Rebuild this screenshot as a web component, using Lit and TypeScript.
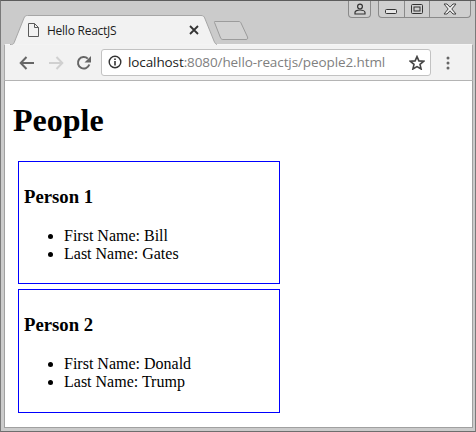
import { LitElement, html, css, svg } from "lit";
import { customElement } from "lit/decorators.js";

const people = [
  { name: "Person 1", first: "Bill", last: "Gates" },
  { name: "Person 2", first: "Donald", last: "Trump" },
];

@customElement("app-root")
export class AppRoot extends LitElement {
  static styles = css`
    :host { display: block; width: 476px; height: 432px; overflow: hidden; }
    .window {
      box-sizing: border-box; width: 476px; height: 432px;
      display: flex; flex-direction: column;
      background: #cbcbcb;
      border: 1px solid #7a7a7a; border-top-color: #5c5c5c;
      border-bottom-color: #6e6e6e;
      padding: 0 2px 3px 3px;
    }
    .titlebar { height: 43px; flex: none; position: relative; display: flex; align-items: flex-start; }
    .tab {
      position: relative; box-sizing: border-box; width: 208px; height: 29px;
      margin: 14px 0 0 5px; flex: none;
      display: flex; align-items: center; padding: 1px 18px 0 18px;
      font: 12px "Open Sans", "Noto Sans", sans-serif; color: #1c1c1c;
    }
    .tab-bg { position: absolute; left: 0; top: 0; }
    .tab > .fg { position: relative; }
    .tab .title { position: relative; margin-left: 7px; flex: 1; letter-spacing: -0.25px; }
    .newtab { position: absolute; left: 209px; top: 20px; }
    .controls { margin-left: auto; display: flex; gap: 7px; margin-right: 2px; }
    .ctl {
      box-sizing: border-box; height: 17px; display: flex;
      border: 1px solid #8a8a8a; border-top: none;
      border-radius: 0 0 4px 4px; background: #cfcfcf;
    }
    .ctl div { display: flex; align-items: center; justify-content: center; box-sizing: border-box; }
    .ctl div + div { border-left: 1px solid #8a8a8a; }
    .ctl .w-profile { width: 21px; }
    .ctl .w-mid { width: 25px; }
    .ctl .w-close { width: 41px; }
    .min-icon { margin-top: 6px; }
    .toolbar {
      flex: none; height: 37px; box-sizing: border-box;
      background: #f2f2f2; border-bottom: 1px solid #b4b4b4; border-top: 1px solid #f6f6f6;
      border-left: 1px solid #a8a8a8; border-right: 1px solid #a8a8a8;
      display: flex; align-items: center; padding-left: 14px;
    }
    .toolbar svg { flex: none; }
    .toolbar .forward { margin-left: 13px; }
    .toolbar .reload { margin-left: 12px; }
    .omni {
      box-sizing: border-box; width: 330px; height: 27px; margin: -1px 0 0 9px;
      background: #fff; border: 1px solid #c2c2c2; border-radius: 3px;
      display: flex; align-items: center; padding: 0 5px 0 6px;
      font: 13.5px "Open Sans", sans-serif; letter-spacing: -0.1px; color: #808080; white-space: nowrap;
    }
    .omni b { font-weight: 400; color: #222; }
    .url { flex: 1; margin-left: 6px; }
    .toolbar .kebab { margin-left: 15px; }
    .page {
      flex: 1; background: #fff; padding: 0 8px; overflow: hidden;
      border: 1px solid #a0a0a0; border-top: none;
      font: 16px "Liberation Serif", "Times New Roman", serif; color: #000;
    }
    h1 { font-size: 32px; font-weight: 700; margin: 21.44px 0; line-height: 37px; }
    .person {
      box-sizing: content-box; width: 250px; padding: 5px; margin: 5px;
      border: 1px solid #00f;
    }
    h3 { font-size: 18.72px; font-weight: 700; margin: 18.72px 0 19px; line-height: 22px; }
    ul { margin: 16px 0 15.7px; padding-left: 40px; line-height: 18px; }
  `;

  private tabShape() {
    return html`<svg class="tab-bg" width="208" height="30" viewBox="0 0 208 30">
      <path d="M1 29.5 H2.5 C4 29.5 4.6 28.8 5.2 27.5 L15 3 C15.7 1.3 16.6.5 18.5.5 H192 C194 .5 195 1.3 195.7 3 L205 26 C205.8 28 206.5 29 208 29.5"
        fill="#f2f2f2" stroke="#a6a6a6" stroke-width="1"/>
    </svg>`;
  }

  render() {
    return html`<div class="window">
      <div class="titlebar">
        <div class="tab">
          ${this.tabShape()}
          <svg class="fg" width="13" height="16" viewBox="0 0 13 16">
            <path d="M1.5 1.5 H7.5 L11.5 5.5 V14.5 H1.5 Z M7.5 1.5 V5.5 H11.5" fill="none" stroke="#5a5a5a" stroke-width="1"/>
          </svg>
          <span class="title">Hello ReactJS</span>
          <svg class="fg" width="10" height="10" viewBox="0 0 10 10">
            <path d="M1 1 L9 9 M9 1 L1 9" stroke="#333" stroke-width="1.8"/>
          </svg>
        </div>
        <svg class="newtab" width="36" height="20" viewBox="0 0 36 20">
          <path d="M1.5 1.5 C1 1 1.3.5 2 .5 H26 C27 .5 27.5 1 28 2 L34.5 16 C35 17.5 34.5 18.5 33 18.5 H10 C8.8 18.5 8.2 18 7.6 17 Z"
            fill="#d2d2d2" stroke="#9c9c9c"/>
        </svg>
        <div class="controls">
          <div class="ctl">
            <div class="w-profile">
              <svg width="12" height="12" viewBox="0 0 12 12">
                <circle cx="6" cy="3.6" r="2.4" fill="none" stroke="#333" stroke-width="1.2"/>
                <path d="M1 11 H11 V9.5 C11 8 8.5 7 6 7 S1 8 1 9.5 Z" fill="none" stroke="#333" stroke-width="1.2"/>
              </svg>
            </div>
          </div>
          <div class="ctl">
            <div class="w-mid">
              <svg class="min-icon" width="13" height="6" viewBox="0 0 13 6">
                <rect x=".5" y=".5" width="11" height="4" rx="1" fill="#e6e6e6" stroke="#333"/>
              </svg>
            </div>
            <div class="w-mid">
              <svg width="12" height="11" viewBox="0 0 12 11">
                <rect x=".5" y=".5" width="11" height="9" rx="1" fill="none" stroke="#333"/>
                <rect x="3" y="3" width="6" height="4" fill="none" stroke="#333"/>
              </svg>
            </div>
            <div class="w-close">
              <svg width="14" height="12" viewBox="0 0 14 12">
                <path d="M1 1 H4 L7 4.2 L10 1 H13 L8.8 6 L13 11 H10 L7 7.8 L4 11 H1 L5.2 6 Z" fill="#f0f0f0" stroke="#444" stroke-width="1"/>
              </svg>
            </div>
          </div>
        </div>
      </div>

      <div class="toolbar">
        <svg width="16" height="14" viewBox="0 0 16 14">
          <path d="M15 7 H2 M7.5 1 L1.7 7 L7.5 13" fill="none" stroke="#666" stroke-width="2"/>
        </svg>
        <svg class="forward" width="16" height="14" viewBox="0 0 16 14">
          <path d="M1 7 H14 M8.5 1 L14.3 7 L8.5 13" fill="none" stroke="#d0d0d0" stroke-width="2"/>
        </svg>
        <svg class="reload" width="16" height="16" viewBox="0 0 16 16">
          <path d="M13.3 9.5 A5.8 5.8 0 1 1 11.8 3.6" fill="none" stroke="#666" stroke-width="2"/>
          <path d="M15 1 V7.5 H8.5 Z" fill="#666"/>
        </svg>
        <div class="omni">
          <svg width="14" height="14" viewBox="0 0 14 14">
            <circle cx="7" cy="7" r="5.8" fill="none" stroke="#333" stroke-width="1.4"/>
            <path d="M7 6 V10.5 M7 3.4 V5" stroke="#333" stroke-width="1.6"/>
          </svg>
          <span class="url"><b>localhost</b>:8080/hello-reactjs/people2.html</span>
          <svg width="16" height="15" viewBox="0 0 16 15">
            <path d="M8 1.6 L9.9 5.9 L14.6 6.3 L11 9.4 L12.1 14 L8 11.6 L3.9 14 L5 9.4 L1.4 6.3 L6.1 5.9 Z" fill="none" stroke="#444" stroke-width="1.6"/>
          </svg>
        </div>
        <svg class="kebab" width="4" height="14" viewBox="0 0 4 14">
          ${[2, 7, 12].map((y) => svg`<circle cx="2" cy=${y} r="1.5" fill="#666"/>`)}
        </svg>
      </div>

      <div class="page">
        <h1>People</h1>
        ${people.map(
          (p) => html`<div class="person">
            <h3>${p.name}</h3>
            <ul>
              <li>First Name: ${p.first}</li>
              <li>Last Name: ${p.last}</li>
            </ul>
          </div>`
        )}
      </div>
    </div>`;
  }
}
